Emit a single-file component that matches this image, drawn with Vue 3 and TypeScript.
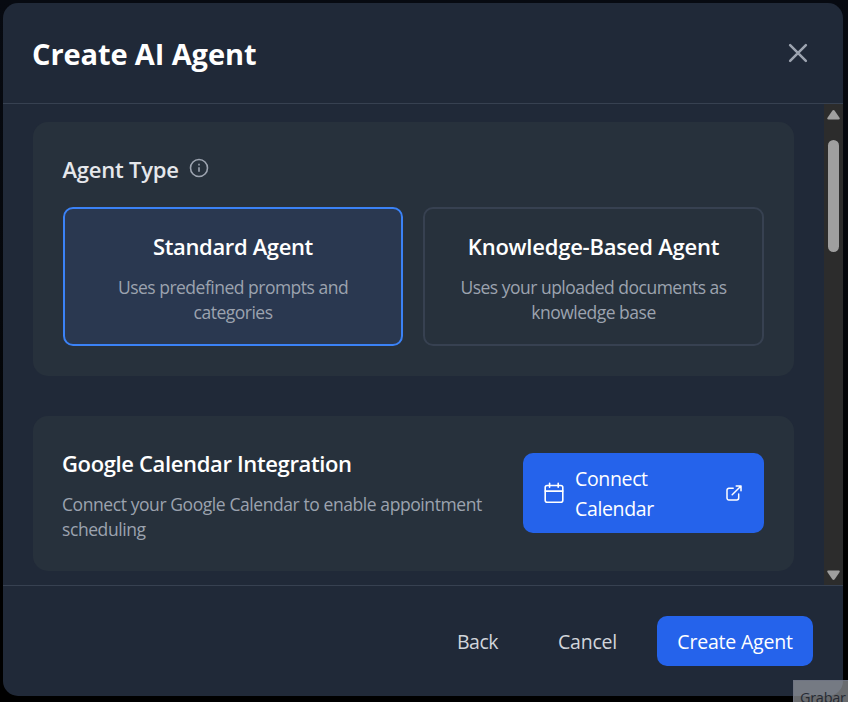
<script setup lang="ts">
import { ref } from 'vue'

interface AgentOption {
  id: string
  title: string
  lines: string[]
}

const options: AgentOption[] = [
  { id: 'standard', title: 'Standard Agent', lines: ['Uses predefined prompts and', 'categories'] },
  { id: 'knowledge', title: 'Knowledge-Based Agent', lines: ['Uses your uploaded documents as', 'knowledge base'] },
]
const selected = ref('standard')
</script>

<template>
  <div class="backdrop">
    <section class="modal">
      <header class="header">
        <h1 class="title">Create AI Agent</h1>
        <button class="close" aria-label="Close">
          <svg width="30" height="30" viewBox="0 0 24 24" fill="none" stroke="currentColor" stroke-width="2" stroke-linecap="round"><path d="M18.3 5.7 5.7 18.3M5.7 5.7l12.6 12.6" /></svg>
        </button>
      </header>

      <div class="body">
        <div class="content">
          <div class="card type-card">
            <div class="label-row">
              <h2 class="label">Agent Type</h2>
              <svg class="info" width="20" height="20" viewBox="0 0 20 20" fill="none" stroke="currentColor" stroke-width="1.6"><circle cx="10" cy="10" r="8.5" /><path d="M10 9.2v4.6M10 5.8v1.8" /></svg>
            </div>
            <div class="options">
              <button v-for="o in options" :key="o.id" class="option" :class="{ active: selected === o.id }" @click="selected = o.id">
                <span class="option-title" :class="o.id">{{ o.title }}</span>
                <span v-for="line in o.lines" :key="line" class="desc">{{ line }}</span>
              </button>
            </div>
          </div>

          <div class="card calendar-card">
            <div class="calendar-text">
              <h2 class="heading">Google Calendar Integration</h2>
              <p class="desc">Connect your Google Calendar to enable appointment</p>
              <p class="desc">scheduling</p>
            </div>
            <button class="connect">
              <svg width="22" height="22" viewBox="0 0 22 22" fill="none" stroke="currentColor" stroke-width="1.6" stroke-linecap="round" stroke-linejoin="round"><rect x="2.2" y="3.5" width="17.6" height="16.7" rx="2" /><path d="M2.2 9.1h17.6M6.6 1.2v4M15.2 1.2v4" /></svg>
              <span class="connect-text"><span>Connect</span><span>Calendar</span></span>
              <svg class="external" width="16" height="16" viewBox="0 0 16 16" fill="none" stroke="currentColor" stroke-width="1.5" stroke-linecap="round" stroke-linejoin="round"><path d="M7.2 3.3H2.9A1.9 1.9 0 0 0 1 5.2v7.9A1.9 1.9 0 0 0 2.9 15h7.9a1.9 1.9 0 0 0 1.9-1.9V9M10.2 1H15v4.8M15 1 6.2 9.8" /></svg>
            </button>
          </div>
        </div>

        <div class="scrollbar">
          <svg width="13" height="10" viewBox="0 0 13 10" fill="currentColor"><path d="M5.3.8a1.5 1.5 0 0 1 2.4 0l4.8 7c.6 1 .1 1.7-.9 1.7H1.4C.4 9.5-.1 8.8.5 7.8z" /></svg>
          <div class="thumb"></div>
          <svg class="down" width="13" height="10" viewBox="0 0 13 10" fill="currentColor"><path d="M5.3 9.2a1.5 1.5 0 0 0 2.4 0l4.8-7C13.1 1.2 12.6.5 11.6.5H1.4C.4.5-.1 1.2.5 2.2z" /></svg>
        </div>
      </div>

      <footer class="footer">
        <button class="plain back">Back</button>
        <button class="plain cancel">Cancel</button>
        <button class="primary">Create Agent</button>
      </footer>
    </section>
    <div class="tooltip">Grabar</div>
  </div>
</template>

<style>
body {
  margin: 0;
  background: #000;
  overflow: hidden;
}
</style>

<style scoped>
* {
  box-sizing: border-box;
}
.backdrop {
  position: relative;
  width: 848px;
  height: 702px;
  padding: 3px 5px 6px 3px;
  overflow: hidden;
  background: linear-gradient(#070a11, #05070b 45%, #000 80%);
  font-family: "Open Sans", "Noto Sans", sans-serif;
  color: #fff;
}
button {
  font: inherit;
  letter-spacing: inherit;
  color: inherit;
  border: 0;
  background: none;
  padding: 0;
  white-space: nowrap;
}
h1, h2, p {
  margin: 0;
  white-space: nowrap;
}
svg {
  display: block;
  flex: none;
}
.modal {
  display: flex;
  flex-direction: column;
  height: 693px;
  border-radius: 15px;
  overflow: hidden;
  background: #202938;
}
.header {
  display: flex;
  align-items: center;
  justify-content: space-between;
  height: 101px;
  padding: 0 30px 0 29px;
  border-bottom: 1px solid #374151;
}
.title {
  font-size: 29px;
  line-height: 40px;
  font-weight: 750;
  letter-spacing: -0.1px;
  padding-top: 1px;
}
.close {
  color: #9ca3af;
}
.body {
  display: flex;
  height: 481px;
}
.content {
  width: 821px;
  padding: 18px 30px 0;
}
.card {
  border-radius: 15px;
  background: #27313c;
  padding: 30px;
}
.type-card {
  height: 254px;
}
.label-row {
  display: flex;
  gap: 10px;
  height: 55px;
  margin-left: -0.5px;
}
.label {
  font-size: 22px;
  line-height: 34px;
  font-weight: 640;
  letter-spacing: -0.22px;
  color: #e5e7eb;
}
.info {
  color: #9ca3af;
  margin-top: 6px;
}
.options {
  display: grid;
  grid-template-columns: 340px 341px;
  gap: 20px;
}
.option {
  display: flex;
  flex-direction: column;
  align-items: center;
  height: 139px;
  padding-top: 20px;
  border: 2px solid #374151;
  border-radius: 10px;
}
.option.active {
  border-color: #3b82f6;
  background: #2a3850;
}
.option-title, .heading {
  font-size: 22px;
  line-height: 34px;
  font-weight: 640;
  letter-spacing: -0.36px;
}
.option-title.knowledge {
  letter-spacing: -0.22px;
}
.option-title, .heading {
  margin-bottom: 12px;
}
.desc {
  font-size: 17.5px;
  line-height: 25px;
  letter-spacing: -0.5px;
  color: #9ca3af;
}
.calendar-card {
  display: flex;
  justify-content: space-between;
  height: 155px;
  margin-top: 40px;
}
.calendar-text {
  margin-left: -1px;
}
.calendar-text .desc {
  letter-spacing: -0.42px;
}
.connect {
  display: flex;
  align-items: center;
  width: 241px;
  height: 80px;
  margin-top: 7px;
  padding: 0 22px 0 20px;
  border-radius: 10px;
  background: #2563eb;
}
.connect-text {
  display: flex;
  flex-direction: column;
  margin-left: 10px;
  padding-top: 2px;
  font-size: 19.5px;
  letter-spacing: -0.35px;
  line-height: 30px;
  text-align: left;
}
.external {
  margin-left: auto;
}
.scrollbar {
  display: flex;
  flex-direction: column;
  align-items: center;
  width: 19px;
  padding: 6px 0 5px;
  background: #2c2c2c;
  color: #9f9f9f;
}
.thumb {
  width: 11px;
  height: 112px;
  margin-top: 20px;
  border-radius: 6px;
  background: #9f9f9f;
}
.down {
  margin-top: auto;
}
.footer {
  display: flex;
  align-items: center;
  justify-content: flex-end;
  height: 111px;
  padding-right: 30px;
  border-top: 1px solid #374151;
  font-size: 19.5px;
  letter-spacing: -0.2px;
  line-height: 30px;
}
.plain {
  color: #d1d5db;
  text-align: left;
  padding-top: 2px;
}
.back {
  width: 101px;
  letter-spacing: -0.5px;
}
.cancel {
  width: 99px;
}
.primary {
  width: 156px;
  height: 50px;
  padding-top: 2px;
  border-radius: 10px;
  background: #2563eb;
}
.tooltip {
  position: absolute;
  left: 793px;
  top: 680px;
  width: 60px;
  height: 30px;
  padding: 5px 0 0 6px;
  border: 1px solid rgba(110, 115, 130, 0.8);
  background: rgba(170, 172, 178, 0.62);
  color: #262a33;
  font-size: 14.5px;
  line-height: 23px;
  letter-spacing: -0.3px;
}
</style>
